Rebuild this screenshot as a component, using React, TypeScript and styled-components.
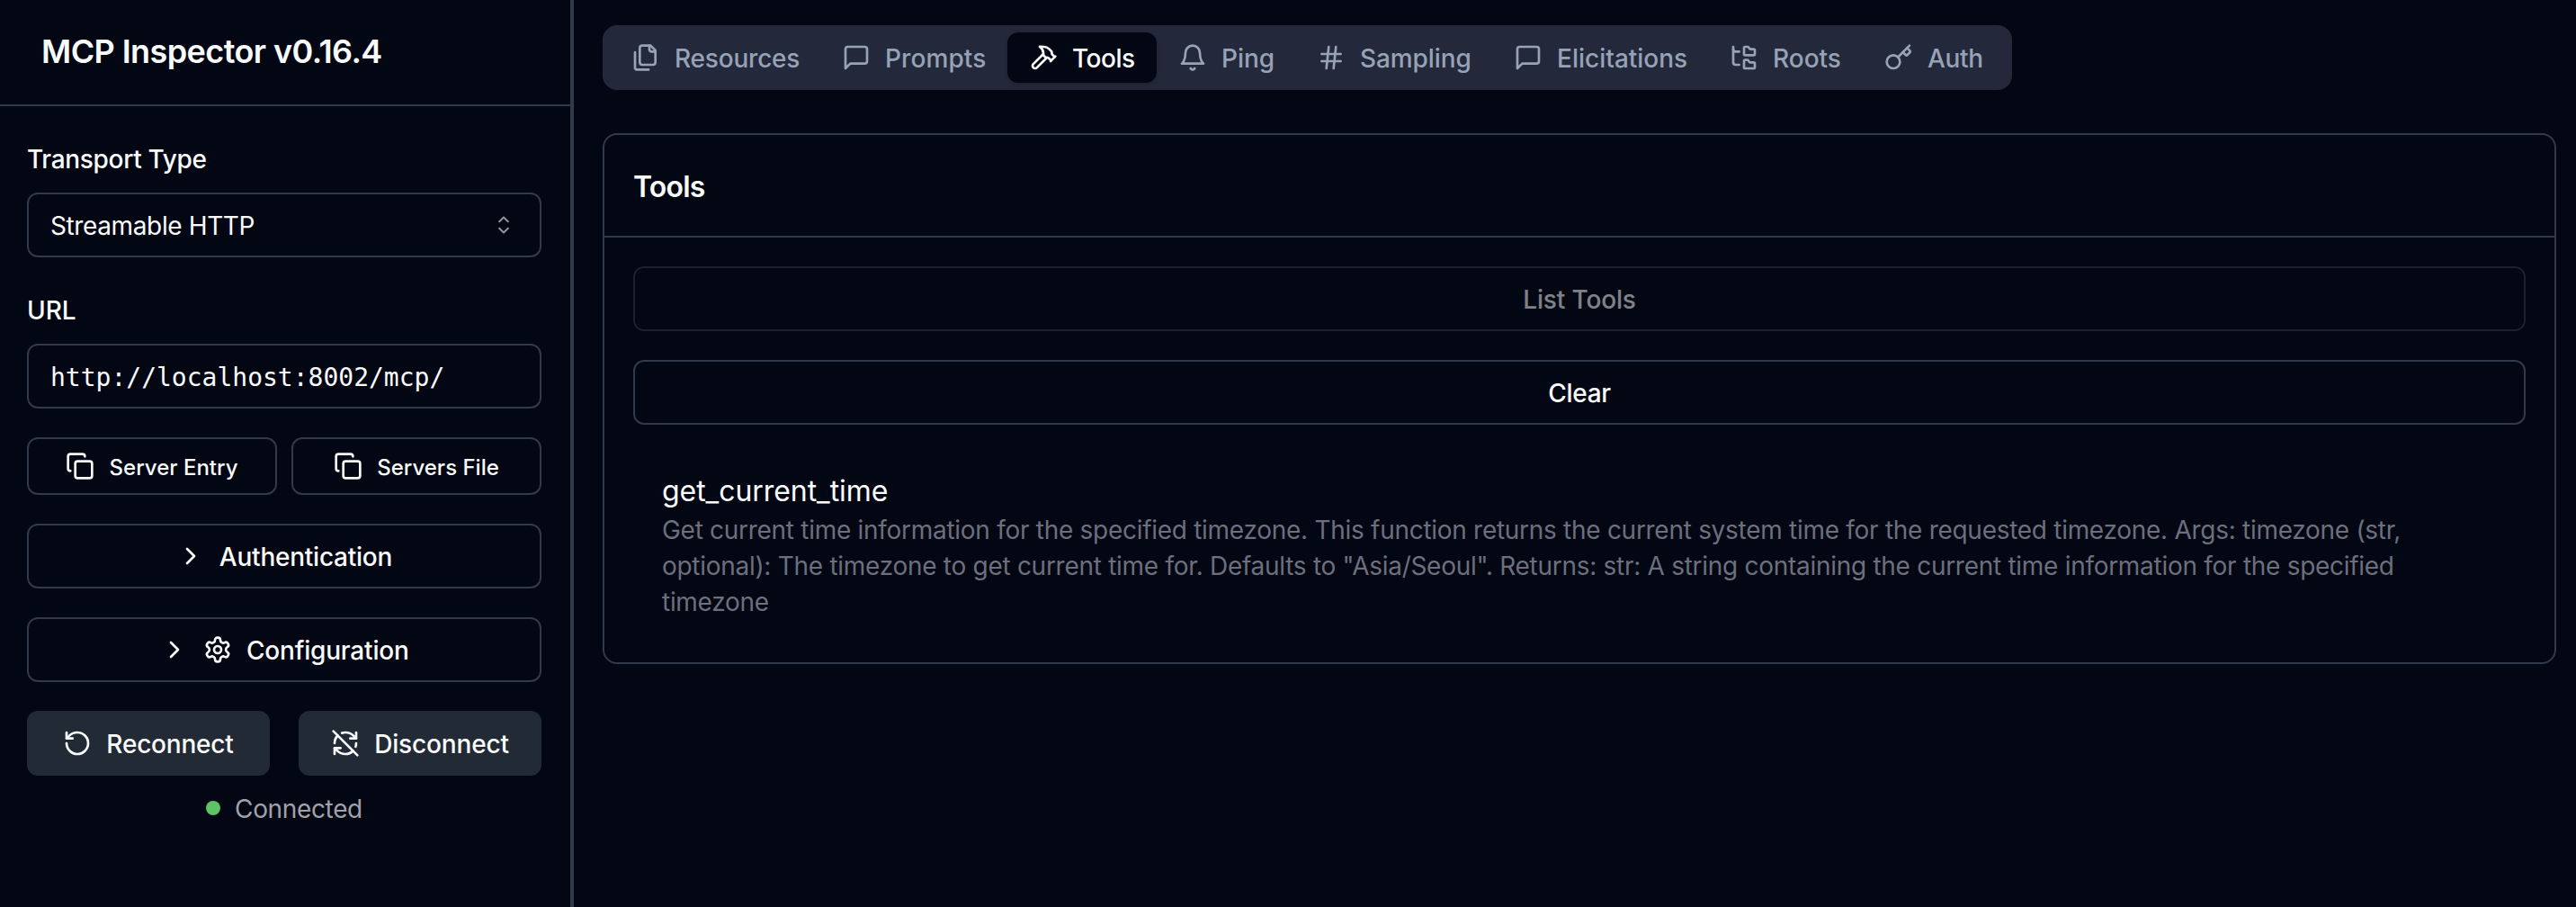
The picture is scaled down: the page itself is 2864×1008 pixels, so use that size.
import React from 'react';
import styled, { createGlobalStyle } from 'styled-components';

const GlobalStyle = createGlobalStyle`
  *, *::before, *::after { box-sizing: border-box; }
  body {
    margin: 0;
    background: #030613;
    color: #fafbfd;
    font-family: Inter, "Liberation Sans", sans-serif;
    overflow: hidden;
  }
`;

const BORDER = '#313a4b';

const Shell = styled.div`
  display: flex;
  width: 100%;
  height: 1008px;
`;

/* ---------- text ---------- */

const Text = styled.span<{ $track?: number; $width?: number }>`
  display: block;
  padding-top: 2px;
  white-space: nowrap;
  letter-spacing: ${(p) => p.$track ?? 0}px;
  width: ${(p) => (p.$width ? `${p.$width}px` : 'auto')};
`;

/* ---------- icons ---------- */

const IconSvg = styled.svg`
  width: 32px;
  height: 32px;
  flex: none;
  display: block;
  fill: none;
  stroke: currentColor;
  stroke-width: 2;
  stroke-linecap: round;
  stroke-linejoin: round;
`;

const Icon = ({ children }: { children: React.ReactNode }) => (
  <IconSvg viewBox="0 0 24 24">{children}</IconSvg>
);

const FilesIcon = () => (
  <Icon>
    <path d="M20 7h-3a2 2 0 0 1-2-2V2" />
    <path d="M9 18a2 2 0 0 1-2-2V4a2 2 0 0 1 2-2h7l4 4v10a2 2 0 0 1-2 2Z" />
    <path d="M3 7.6v12.8A1.6 1.6 0 0 0 4.6 22h9.8" />
  </Icon>
);
const MessageIcon = () => (
  <Icon>
    <path d="M21 15a2 2 0 0 1-2 2H7l-4 4V5a2 2 0 0 1 2-2h14a2 2 0 0 1 2 2z" />
  </Icon>
);
const HammerIcon = () => (
  <Icon>
    <path d="m15 12-8.373 8.373a1 1 0 1 1-3-3L12 9" />
    <path d="m18 15 4-4" />
    <path d="m21.5 11.5-1.914-1.914A2 2 0 0 1 19 8.172V7l-2.26-2.26a6 6 0 0 0-4.202-1.756L9 2.96l.92.82A6.18 6.18 0 0 1 12 8.4V10l2 2h1.172a2 2 0 0 1 1.414.586L18.5 14.5" />
  </Icon>
);
const BellIcon = () => (
  <Icon>
    <path d="M6 8a6 6 0 0 1 12 0c0 7 3 9 3 9H3s3-2 3-9" />
    <path d="M10.3 21a1.94 1.94 0 0 0 3.4 0" />
  </Icon>
);
const HashIcon = () => (
  <Icon>
    <path d="M4 9h16M4 15h16M10 3 8 21M16 3l-2 18" />
  </Icon>
);
const FolderTreeIcon = () => (
  <Icon>
    <path d="M20 10a1 1 0 0 0 1-1V6a1 1 0 0 0-1-1h-2.5a1 1 0 0 1-.8-.4l-.9-1.2A1 1 0 0 0 15 3h-2a1 1 0 0 0-1 1v5a1 1 0 0 0 1 1Z" />
    <path d="M20 21a1 1 0 0 0 1-1v-3a1 1 0 0 0-1-1h-2.9a1 1 0 0 1-.88-.55l-.42-.85a1 1 0 0 0-.92-.6H13a1 1 0 0 0-1 1v5a1 1 0 0 0 1 1Z" />
    <path d="M3 5a2 2 0 0 0 2 2h3" />
    <path d="M3 3v13a2 2 0 0 0 2 2h3" />
  </Icon>
);
const KeyIcon = () => (
  <Icon>
    <path d="m15.5 7.5 2.3 2.3a1 1 0 0 0 1.4 0l2.1-2.1a1 1 0 0 0 0-1.4L19 4" />
    <path d="m21 2-9.6 9.6" />
    <circle cx="7.5" cy="15.5" r="5.5" />
  </Icon>
);
const CopyIcon = () => (
  <Icon>
    <rect width="14" height="14" x="8" y="8" rx="2" ry="2" />
    <path d="M4 16c-1.1 0-2-.9-2-2V4c0-1.1.9-2 2-2h10c1.1 0 2 .9 2 2" />
  </Icon>
);
const ChevronIcon = () => (
  <Icon>
    <path d="m9 18 6-6-6-6" />
  </Icon>
);
const SettingsIcon = () => (
  <Icon>
    <path d="M12.22 2h-.44a2 2 0 0 0-2 2v.18a2 2 0 0 1-1 1.73l-.43.25a2 2 0 0 1-2 0l-.15-.08a2 2 0 0 0-2.73.73l-.22.38a2 2 0 0 0 .73 2.73l.15.1a2 2 0 0 1 1 1.72v.51a2 2 0 0 1-1 1.74l-.15.09a2 2 0 0 0-.73 2.73l.22.38a2 2 0 0 0 2.73.73l.15-.08a2 2 0 0 1 2 0l.43.25a2 2 0 0 1 1 1.73V20a2 2 0 0 0 2 2h.44a2 2 0 0 0 2-2v-.18a2 2 0 0 1 1-1.73l.43-.25a2 2 0 0 1 2 0l.15.08a2 2 0 0 0 2.73-.73l.22-.39a2 2 0 0 0-.73-2.73l-.15-.08a2 2 0 0 1-1-1.74v-.5a2 2 0 0 1 1-1.74l.15-.09a2 2 0 0 0 .73-2.73l-.22-.38a2 2 0 0 0-2.73-.73l-.15.08a2 2 0 0 1-2 0l-.43-.25a2 2 0 0 1-1-1.73V4a2 2 0 0 0-2-2z" />
    <circle cx="12" cy="12" r="3" />
  </Icon>
);
const ReconnectIcon = () => (
  <Icon>
    <path d="M3 12a9 9 0 1 0 9-9 9.75 9.75 0 0 0-6.74 2.74L3 8" />
    <path d="M3 3v5h5" />
  </Icon>
);
const DisconnectIcon = () => (
  <Icon>
    <path d="M21 8L18.74 5.74A9.75 9.75 0 0 0 12 3C11 3 10.03 3.16 9.13 3.47" />
    <path d="M8 16H3v5" />
    <path d="M3 12C3 9.51 4 7.26 5.64 5.64" />
    <path d="m3 16 2.26 2.26A9.75 9.75 0 0 0 12 21c2.49 0 4.74-1 6.36-2.64" />
    <path d="M21 12c0 1-.16 1.97-.47 2.87" />
    <path d="M21 3v5h-5" />
    <path d="M22 22 2 2" />
  </Icon>
);

const SelectArrows = styled.svg`
  width: 32px;
  height: 32px;
  flex: none;
  fill: none;
  stroke: #929397;
  stroke-width: 0.95;
  stroke-linecap: round;
  stroke-linejoin: round;
`;

/* ---------- sidebar ---------- */

const Sidebar = styled.aside`
  width: 638px;
  flex: none;
  border-right: 4px solid ${BORDER};
  display: flex;
  flex-direction: column;
`;

const SidebarHeader = styled.header`
  height: 118px;
  border-bottom: 2px solid ${BORDER};
  padding: 0 46px 4px;
  display: flex;
  align-items: center;
`;

const AppTitle = styled.h1`
  margin: 0;
  font-size: 36px;
  line-height: 56px;
  font-weight: 600;
`;

const Form = styled.div`
  padding: 32px 32px 0 30px;
  display: flex;
  flex-direction: column;
  gap: 32px;
`;

const Field = styled.div`
  display: flex;
  flex-direction: column;
  gap: 16px;
`;

const Label = styled.label`
  height: 48px;
  padding-top: 3px;
  display: flex;
  align-items: center;
  font-size: 28px;
  font-weight: 500;
`;

const Control = styled.div<{ $mono?: boolean }>`
  height: 72px;
  border: 2px solid ${BORDER};
  border-radius: 12px;
  padding: 0 24px;
  display: flex;
  align-items: center;
  justify-content: space-between;
  font-size: 28px;
  ${(p) => p.$mono && 'font-family: "DejaVu Sans Mono", "Liberation Mono", monospace;'}
`;

const ButtonPair = styled.div<{ $gap: number }>`
  display: grid;
  grid-template-columns: 1fr 1fr;
  gap: ${(p) => p.$gap}px;
`;

const Button = styled.button<{ $small?: boolean; $solid?: boolean }>`
  width: 100%;
  height: ${(p) => (p.$small ? 64 : 72)}px;
  padding: 0;
  border: 2px solid ${(p) => (p.$solid ? '#222a35' : BORDER)};
  border-radius: 12px;
  background: ${(p) => (p.$solid ? '#222a35' : 'transparent')};
  color: inherit;
  font-family: inherit;
  font-size: ${(p) => (p.$small ? 24 : 28)}px;
  font-weight: 500;
  display: flex;
  align-items: center;
  justify-content: center;
  gap: 16px;
  &:disabled { opacity: 0.5; }
`;

const Actions = styled.div`
  display: flex;
  flex-direction: column;
  gap: 16px;
`;

const Status = styled.div`
  height: 40px;
  display: flex;
  align-items: center;
  justify-content: center;
  gap: 16px;
  font-size: 28px;
  color: #a0a2ab;
`;

const StatusDot = styled.span`
  width: 16px;
  height: 16px;
  border-radius: 50%;
  background: #5dc466;
`;

/* ---------- main ---------- */

const Main = styled.main`
  flex: 1;
  min-width: 0;
  padding: 28px 22px 0 32px;
  display: flex;
  flex-direction: column;
  align-items: flex-start;
  gap: 48px;
`;

const TabBar = styled.nav`
  height: 72px;
  padding: 8px;
  border-radius: 16px;
  background: #23293a;
  display: flex;
`;

const Tab = styled.div<{ $active?: boolean }>`
  height: 56px;
  padding: 0 24px;
  border-radius: 12px;
  display: flex;
  align-items: center;
  gap: 16px;
  font-size: 28px;
  font-weight: 500;
  color: ${(p) => (p.$active ? '#fafbfd' : '#97a2b7')};
  background: ${(p) => (p.$active ? '#030613' : 'transparent')};
  box-shadow: ${(p) => (p.$active ? '0 2px 4px rgba(0, 0, 0, 0.2)' : 'none')};
`;

const Panel = styled.section`
  align-self: stretch;
  border: 2px solid ${BORDER};
  border-radius: 16px;
`;

const PanelHeader = styled.div`
  height: 114px;
  padding: 0 32px;
  border-bottom: 2px solid ${BORDER};
  display: flex;
  align-items: center;
  font-size: 32px;
  font-weight: 600;
`;

const PanelBody = styled.div`
  padding: 32px;
  display: flex;
  flex-direction: column;
  gap: 32px;
`;

const ToolItem = styled.article`
  padding: 16px 32px;
  display: flex;
  flex-direction: column;
`;

const ToolName = styled.div`
  height: 48px;
  font-size: 32px;
  line-height: 48px;
`;

const ToolDescription = styled.div`
  font-size: 28px;
  line-height: 40px;
  color: #6c6f7c;
  width: 1970px;
  padding-top: 1px;
  margin-bottom: -1px;
  letter-spacing: -0.285px;
`;

const TABS = [
  { name: 'Resources', icon: <FilesIcon />, width: 138, track: -0.2 },
  { name: 'Prompts', icon: <MessageIcon />, width: 112, track: 0.1 },
  { name: 'Tools', icon: <HammerIcon />, width: 70, track: -0.5, active: true },
  { name: 'Ping', icon: <BellIcon />, width: 58, track: 0 },
  { name: 'Sampling', icon: <HashIcon />, width: 123, track: -0.1 },
  { name: 'Elicitations', icon: <MessageIcon />, width: 144, track: 0 },
  { name: 'Roots', icon: <FolderTreeIcon />, width: 76, track: 0 },
  { name: 'Auth', icon: <KeyIcon />, width: 62, track: -0.3 },
];

export default function App() {
  return (
    <Shell>
      <GlobalStyle />
      <Sidebar>
        <SidebarHeader>
          <AppTitle>
            <Text $track={-0.58}>MCP Inspector v0.16.4</Text>
          </AppTitle>
        </SidebarHeader>
        <Form>
          <Field>
            <Label>
              <Text $track={-0.32}>Transport Type</Text>
            </Label>
            <Control>
              <Text $track={-0.38}>Streamable HTTP</Text>
              <SelectArrows viewBox="0 0 15 15">
                <path d="M5.25 5.75 7.5 3.5l2.25 2.25M5.25 9.25 7.5 11.5l2.25-2.25" />
              </SelectArrows>
            </Control>
          </Field>
          <Field>
            <Label>
              <Text>URL</Text>
            </Label>
            <Control $mono>
              <Text>http://localhost:8002/mcp/</Text>
            </Control>
          </Field>
          <ButtonPair $gap={16}>
            <Button $small>
              <CopyIcon />
              <Text $width={144}>Server Entry</Text>
            </Button>
            <Button $small>
              <CopyIcon />
              <Text>Servers File</Text>
            </Button>
          </ButtonPair>
          <Button>
            <ChevronIcon />
            <Text $track={-0.24}>Authentication</Text>
          </Button>
          <Button>
            <ChevronIcon />
            <SettingsIcon />
            <Text $track={-0.2} $width={180}>Configuration</Text>
          </Button>
          <Actions>
            <ButtonPair $gap={32}>
              <Button $solid>
                <ReconnectIcon />
                <Text $track={-0.2}>Reconnect</Text>
              </Button>
              <Button $solid>
                <DisconnectIcon />
                <Text $track={-0.15}>Disconnect</Text>
              </Button>
            </ButtonPair>
            <Status>
              <StatusDot />
              <Text $track={-0.35}>Connected</Text>
            </Status>
          </Actions>
        </Form>
      </Sidebar>
      <Main>
        <TabBar>
          {TABS.map((t) => (
            <Tab key={t.name} $active={t.active}>
              {t.icon}
              <Text $track={t.track} $width={t.width}>
                {t.name}
              </Text>
            </Tab>
          ))}
        </TabBar>
        <Panel>
          <PanelHeader>
            <Text $track={-0.8}>Tools</Text>
          </PanelHeader>
          <PanelBody>
            <Button disabled>
              <Text $track={-0.15}>List Tools</Text>
            </Button>
            <Button>
              <Text $track={-0.3}>Clear</Text>
            </Button>
            <ToolItem>
              <ToolName>
                <Text $track={-0.05}>get_current_time</Text>
              </ToolName>
              <ToolDescription>
                Get current time information for the specified timezone. This function returns the
                current system time for the requested timezone. Args: timezone (str, optional): The
                timezone to get current time for. Defaults to "Asia/Seoul". Returns: str: A string
                containing the current time information for the specified timezone
              </ToolDescription>
            </ToolItem>
          </PanelBody>
        </Panel>
      </Main>
    </Shell>
  );
}
